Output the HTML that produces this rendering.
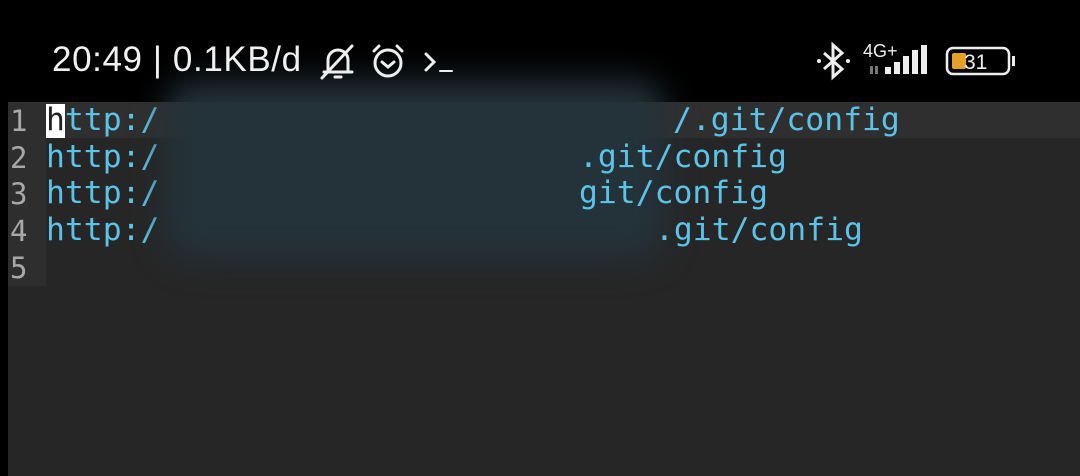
<!DOCTYPE html>
<html><head><style>
body{margin:0;width:1080px;height:476px;background:#000;overflow:hidden;position:relative;font-family:"Liberation Sans",sans-serif}
.sb{position:absolute;top:40px;left:52px;color:#f0f0f0;font-size:35px;letter-spacing:0.6px}
.ed{position:absolute;left:8px;top:102px;width:1072px;height:374px;background:#262626}
.gut{position:absolute;left:8px;top:102px;width:38px;height:184px;background:#2e2e2e}
.hl{position:absolute;left:8px;top:102px;width:1072px;height:36px;background:#2f2f2f}
.ln{position:absolute;left:10px;color:#a8a8a8;font:29px "DejaVu Sans Mono",monospace}
.tx{position:absolute;color:#5cc3e8;font:31.4px "DejaVu Sans Mono",monospace;white-space:pre}
.blur{position:absolute;left:165px;top:80px;width:500px;height:180px;background:#24323a;filter:blur(16px);border-radius:30px}
</style></head><body>
<div class="ed"></div><div class="hl"></div><div class="gut"></div>
<div class="ln" style="top:104px">1</div>
<div class="ln" style="top:141px">2</div>
<div class="ln" style="top:177px">3</div>
<div class="ln" style="top:214px">4</div>
<div class="ln" style="top:251px">5</div>
<div style="position:absolute;left:46px;top:104px;width:19px;height:34px;background:#fff"></div>
<div class="tx" style="left:46px;top:102px"><span style="color:#222">h</span>ttp:/</div>
<div class="tx" style="left:46px;top:139px">http:/</div>
<div class="tx" style="left:46px;top:175px">http:/</div>
<div class="tx" style="left:46px;top:212px">http:/</div>
<div class="blur"></div>
<div class="tx" style="left:673px;top:102px">/.git/config</div>
<div class="tx" style="left:579px;top:139px">.git/config</div>
<div class="tx" style="left:579px;top:175px">git/config</div>
<div class="tx" style="left:655px;top:212px">.git/config</div>
<div class="sb">20:49 | 0.1KB/d</div>
<svg style="position:absolute;left:318px;top:42px" width="140" height="40" viewBox="0 0 140 40" fill="none" stroke="#eee" stroke-width="3" stroke-linecap="round">
<path d="M6 30h28M10 30V18a10 10 0 0 1 20 0v12M17 35h6M4 36L34 4"/>
<circle cx="70" cy="21" r="13"/><path d="M64 20l6 5 6-5M56 9l5-5M84 9l-5-5"/>
<path d="M108 12l8 8-8 8" /><path d="M122 29h12" stroke-width="2"/>
</svg>
<svg style="position:absolute;left:814px;top:40px" width="210" height="42" viewBox="0 0 210 42">
<g fill="none" stroke="#eee" stroke-width="3"><path d="M10 13l18 16-9 8V5l9 8-18 16"/></g>
<circle cx="5" cy="21" r="2" fill="#eee"/><circle cx="34" cy="21" r="2" fill="#eee"/>
<text x="49" y="17" fill="#eee" font-size="18" font-family="Liberation Sans">4G+</text>
<g fill="#eee"><rect x="71" y="27" width="6" height="7"/><rect x="80" y="22" width="6" height="12"/><rect x="89" y="16" width="6" height="18"/><rect x="98" y="10" width="6" height="24"/><rect x="107" y="5" width="6" height="29"/></g>
<g fill="#777"><rect x="56" y="26" width="3" height="8"/><rect x="61" y="26" width="3" height="8"/></g>
<rect x="133" y="8" width="62" height="26" rx="6" fill="none" stroke="#eee" stroke-width="2.5"/>
<rect x="138" y="13" width="14" height="16" rx="2" fill="#e5a02a"/>
<rect x="198" y="16" width="3" height="10" fill="#eee"/>
<text x="150" y="29" fill="#eee" font-size="21" font-family="Liberation Sans">31</text>
</svg>
</body></html>
